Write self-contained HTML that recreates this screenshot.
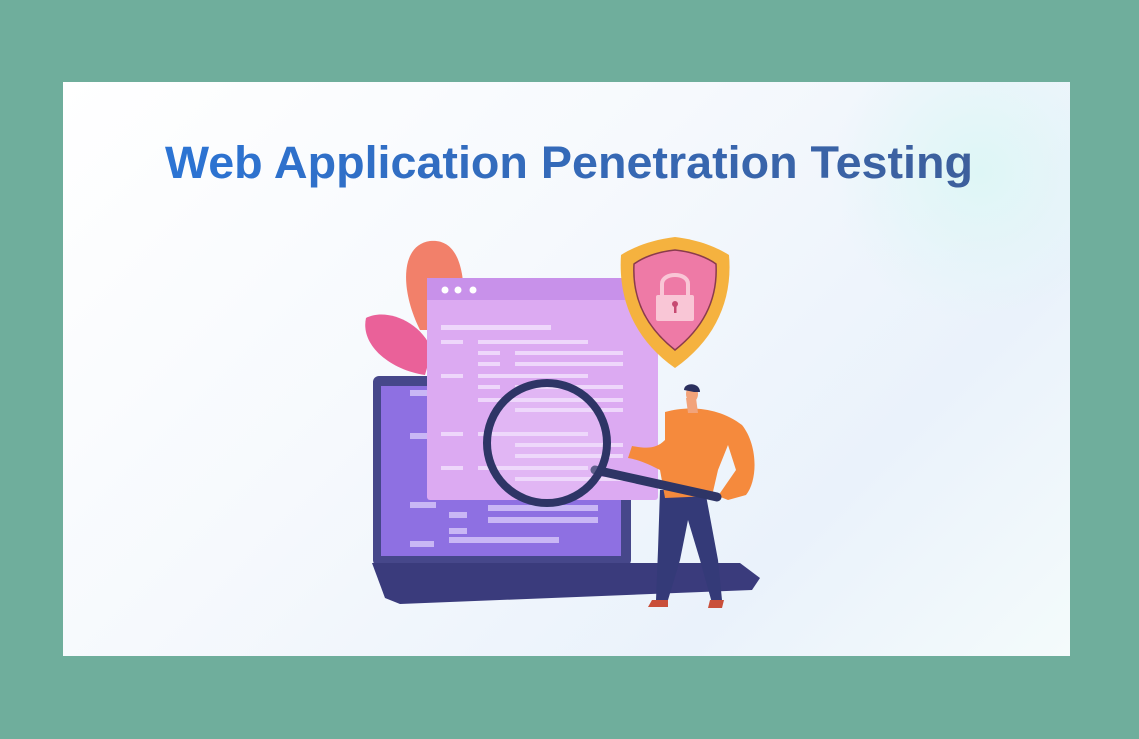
<!DOCTYPE html>
<html><head><style>
html,body{margin:0;padding:0;}
body{width:1139px;height:739px;background:#6fae9c;position:relative;overflow:hidden;font-family:"Liberation Sans",sans-serif;}
.card{position:absolute;left:63px;top:82px;width:1007px;height:574px;background:linear-gradient(135deg,#ffffff 0%,#f6f9fd 40%,#eaf2fb 75%,#f4fbfb 100%);overflow:hidden;}
.glow{position:absolute;right:-60px;top:-60px;width:300px;height:300px;border-radius:50%;background:radial-gradient(circle,#def6f6 0%,rgba(222,246,246,0) 70%);}
</style></head><body>
<div class="card"><div class="glow"></div></div>
<svg width="1139" height="739" style="position:absolute;left:0;top:0">
<defs>
<linearGradient id="tg" x1="0" x2="1"><stop offset="0" stop-color="#2c74d4"/><stop offset="1" stop-color="#3d5f9c"/></linearGradient>
</defs>
<text x="165" y="178" font-family="Liberation Sans" font-weight="bold" font-size="45" fill="url(#tg)" textLength="808" lengthAdjust="spacingAndGlyphs" stroke="#fff" stroke-width="0">Web Application Penetration Testing</text>
<!-- leaves -->
<path d="M420 330 C400 290 400 245 430 241 C460 238 468 275 462 330 Z" fill="#f2806a"/>
<path d="M425 375 C390 370 360 345 366 318 C385 308 420 320 432 350 Z" fill="#ea6199"/>
<!-- laptop -->
<rect x="373" y="376" width="258" height="190" rx="6" fill="#46478a"/>
<rect x="381" y="386" width="240" height="170" fill="#8e70e2"/>
<path d="M372 563 L740 563 L760 578 L752 590 L400 604 L385 598 Z" fill="#3a3b7c"/>
<g fill="#c9b7f5">
<rect x="410" y="390" width="28" height="6"/><rect x="410" y="433" width="22" height="6"/>
<rect x="410" y="502" width="26" height="6"/><rect x="449" y="512" width="18" height="6"/>
<rect x="488" y="505" width="110" height="6"/><rect x="488" y="517" width="110" height="6"/>
<rect x="449" y="528" width="18" height="6"/><rect x="410" y="541" width="24" height="6"/>
<rect x="449" y="537" width="110" height="6"/>
</g>
<!-- window -->
<rect x="427" y="278" width="231" height="222" rx="3" fill="#dcaaf2"/>
<rect x="427" y="278" width="231" height="22" fill="#c891ea"/>
<circle cx="445" cy="290" r="3.5" fill="#fff"/><circle cx="458" cy="290" r="3.5" fill="#fff"/><circle cx="473" cy="290" r="3.5" fill="#fff"/>
<g fill="#eed7fb">
<rect x="441" y="325" width="110" height="5"/>
<rect x="441" y="340" width="22" height="4"/><rect x="478" y="340" width="110" height="4"/>
<rect x="478" y="351" width="22" height="4"/><rect x="515" y="351" width="108" height="4"/>
<rect x="478" y="362" width="22" height="4"/><rect x="515" y="362" width="108" height="4"/>
<rect x="441" y="374" width="22" height="4"/><rect x="478" y="374" width="110" height="4"/>
<rect x="478" y="385" width="22" height="4"/><rect x="515" y="385" width="108" height="4"/>
<rect x="478" y="398" width="145" height="4"/><rect x="515" y="408" width="108" height="4"/>
<rect x="441" y="432" width="22" height="4"/><rect x="478" y="432" width="110" height="4"/>
<rect x="515" y="443" width="108" height="4"/><rect x="515" y="454" width="108" height="4"/>
<rect x="441" y="466" width="22" height="4"/><rect x="478" y="466" width="110" height="4"/>
<rect x="515" y="477" width="108" height="4"/>
</g>
<!-- shield -->
<path d="M675 237 C700 240 718 248 729 255 C733 300 715 340 675 368 C635 340 618 300 621 255 C632 248 650 240 675 237 Z" fill="#f5b23f"/>
<path d="M675 250 C694 252 708 258 716 264 C718 300 703 328 675 350 C647 328 632 300 634 264 C642 258 656 252 675 250 Z" fill="#ee7aa6" stroke="#8a3b4d" stroke-width="1.5"/>
<path d="M662 297 L662 284 C662 272 688 272 688 284 L688 297" fill="none" stroke="#f9c6d6" stroke-width="4"/>
<rect x="656" y="295" width="38" height="26" rx="2" fill="#f9c6d6"/>
<circle cx="675" cy="304" r="3" fill="#c74a72"/><rect x="674" y="305" width="2.5" height="8" fill="#c74a72"/>
<!-- person legs -->
<path d="M660 490 L705 490 L718 560 L722 600 L712 603 L700 560 L688 520 L680 560 L668 600 L656 600 L658 550 Z" fill="#343a78"/>
<path d="M652 600 L668 600 L668 607 L648 607 Z M710 600 L724 600 L722 608 L708 608 Z" fill="#c94f3a"/>
<!-- body -->
<path d="M665 412 C690 405 720 408 742 425 C758 445 758 480 746 495 L728 500 L718 496 L736 470 L728 445 L718 470 L712 496 L665 498 L660 470 C650 465 640 460 628 458 L632 446 C645 448 655 450 665 440 Z" fill="#f58a3d"/>
<path d="M686 398 L696 398 L698 413 L688 413 Z" fill="#f2a37a"/>
<ellipse cx="692" cy="394" rx="6" ry="8" fill="#f2a37a"/>
<path d="M684 390 C684 382 700 382 700 392 L694 392 Z" fill="#2b2f5e"/>
<!-- magnifier -->
<line x1="595" y1="470" x2="717" y2="497" stroke="#2e3566" stroke-width="9" stroke-linecap="round"/>
<circle cx="547" cy="443" r="60" fill="rgba(240,220,250,0.25)" stroke="#2e3566" stroke-width="8"/>
</svg>
</body></html>
